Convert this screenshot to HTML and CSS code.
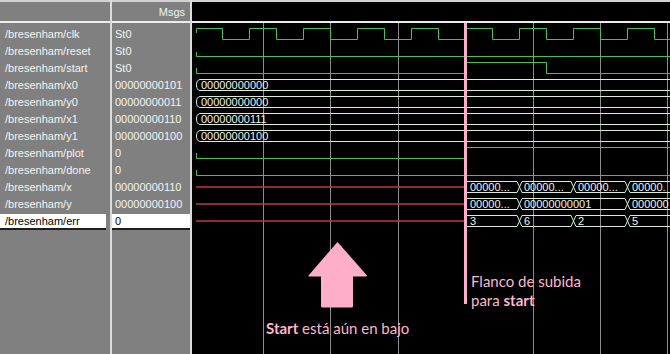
FILE: index.html
```html
<!DOCTYPE html>
<html>
<head>
<meta charset="utf-8">
<link rel="stylesheet" href="styles.css">
</head>
<body>
<div class="app">
  <div class="col names">
    <div class="head"></div>
    <div class="rows">
      <div class="row">/bresenham/clk</div>
      <div class="row">/bresenham/reset</div>
      <div class="row">/bresenham/start</div>
      <div class="row">/bresenham/x0</div>
      <div class="row">/bresenham/y0</div>
      <div class="row">/bresenham/x1</div>
      <div class="row">/bresenham/y1</div>
      <div class="row">/bresenham/plot</div>
      <div class="row">/bresenham/done</div>
      <div class="row">/bresenham/x</div>
      <div class="row">/bresenham/y</div>
      <div class="row sel">/bresenham/err</div>
    </div>
  </div>
  <div class="sep"></div>
  <div class="col values">
    <div class="head">Msgs</div>
    <div class="rows">
      <div class="row">St0</div>
      <div class="row">St0</div>
      <div class="row">St0</div>
      <div class="row">00000000101</div>
      <div class="row">00000000011</div>
      <div class="row">00000000110</div>
      <div class="row">00000000100</div>
      <div class="row">0</div>
      <div class="row">0</div>
      <div class="row">00000000110</div>
      <div class="row">00000000100</div>
      <div class="row sel">0</div>
    </div>
  </div>
  <div class="sep"></div>
  <div class="wave">
    <div class="whead"></div>
    <svg class="canvas" width="478" height="331" viewBox="192 23 478 331" xmlns="http://www.w3.org/2000/svg">
      <g class="grid" stroke="#8c8c8c" stroke-width="1">
        <line x1="263.5" y1="23" x2="263.5" y2="354"/>
        <line x1="330.5" y1="23" x2="330.5" y2="354"/>
        <line x1="398.5" y1="23" x2="398.5" y2="354"/>
        <line x1="533.5" y1="23" x2="533.5" y2="354"/>
        <line x1="600.5" y1="23" x2="600.5" y2="354"/>
        <line x1="667.5" y1="23" x2="667.5" y2="354"/>
      </g>
      <g fill="none" stroke="#45c445" stroke-width="1">
        <path d="M196.5,33 V28.5 H222.5 V39.5 H249.5 V28.5 H276.5 V39.5 H303.5 V28.5 H330.5 V39.5 H357.5 V28.5 H384.5 V39.5 H411.5 V28.5 H438.5 V39.5 H465.5 V28.5 H492.5 V39.5 H519.5 V28.5 H546.5 V39.5 H573.5 V28.5 H600.5 V39.5 H627.5 V28.5 H654.5 V39.5 H670"/>
        <path d="M196.5,52 V56.5 H670"/>
        <path d="M196.5,68 V73.5 H465.5 V62.5 H546.5 V73.5 H670"/>
        <path d="M196.5,153 V158.5 H465.5 V147.5 H670"/>
        <path d="M196.5,170 V175.5 H670"/>
      </g>
      <g fill="none" stroke="#c03a3a" stroke-width="1.5">
        <line x1="196" y1="187" x2="465" y2="187"/>
        <line x1="196" y1="204" x2="465" y2="204"/>
        <line x1="196" y1="221" x2="465" y2="221"/>
      </g>
      <g fill="none" stroke="#d6eed6" stroke-width="1">
        <path d="M200,79.5 Q196.5,80 196.5,85 Q196.5,90 200,90.5 M200,79.5 H670 M200,90.5 H670"/>
        <path d="M200,96.5 Q196.5,97 196.5,102 Q196.5,107 200,107.5 M200,96.5 H670 M200,107.5 H670"/>
        <path d="M200,113.5 Q196.5,114 196.5,119 Q196.5,124 200,124.5 M200,113.5 H670 M200,124.5 H670"/>
        <path d="M200,130.5 Q196.5,131 196.5,136 Q196.5,141 200,141.5 M200,130.5 H670 M200,141.5 H670"/>
        <path d="M466.5,181.5 V192.5 M466.5,181.5 H517 L519.5,187 L517,192.5 H466.5 M522,181.5 L519.5,187 L522,192.5 M522,181.5 H571 L573.5,187 L571,192.5 H522 M576,181.5 L573.5,187 L576,192.5 M576,181.5 H625 L627.5,187 L625,192.5 H576 M630,181.5 L627.5,187 L630,192.5 M630,181.5 H670 M630,192.5 H670"/>
        <path d="M466.5,198.5 V209.5 M466.5,198.5 H517 L519.5,204 L517,209.5 H466.5 M522,198.5 L519.5,204 L522,209.5 M522,198.5 H625 L627.5,204 L625,209.5 H522 M630,198.5 L627.5,204 L630,209.5 M630,198.5 H670 M630,209.5 H670"/>
        <path d="M466.5,215.5 V226.5 M466.5,215.5 H517 L519.5,221 L517,226.5 H466.5 M522,215.5 L519.5,221 L522,226.5 M522,215.5 H571 L573.5,221 L571,226.5 H522 M576,215.5 L573.5,221 L576,226.5 M576,215.5 H625 L627.5,221 L625,226.5 H576 M630,215.5 L627.5,221 L630,226.5 M630,215.5 H670 M630,226.5 H670"/>
      </g>
      <g class="busval">
        <text x="201" y="89">00000000000</text>
        <text x="201" y="106">00000000000</text>
        <text x="201" y="123">00000000111</text>
        <text x="201" y="140">00000000100</text>
        <text x="470" y="191">00000...</text>
        <text x="524" y="191">00000...</text>
        <text x="578" y="191">00000...</text>
        <text x="632" y="191">00000.</text>
        <text x="470" y="208">00000...</text>
        <text x="524" y="208">00000000001</text>
        <text x="632" y="208">000000</text>
        <text x="470" y="225">3</text>
        <text x="524" y="225">6</text>
        <text x="578" y="225">2</text>
        <text x="632" y="225">5</text>
      </g>
      <rect x="464" y="23" width="3" height="281" fill="#ffaec9"/>
      <path d="M337.5,242 L367,275.5 Q367,276.5 366,276.5 L353,276.5 L353,306 Q353,307.5 351.5,307.5 L322.5,307.5 Q321,307.5 321,306 L321,276.5 L309,276.5 Q308,276.5 308.5,275.5 Z" fill="#ffaec9"/>
    </svg>
    <div class="note note-start"><b>Start</b> está aún en bajo</div>
    <div class="note note-edge">Flanco de subida<br>para <b>start</b></div>
  </div>
</div>
</body>
</html>
```
FILE: styles.css
```css
html, body {
  margin: 0;
  padding: 0;
  background: #808080;
}
.app {
  display: flex;
  width: 670px;
  height: 354px;
  overflow: hidden;
  font-family: "Liberation Sans", Arial, sans-serif;
  font-size: 11px;
}
.col {
  background: #808080;
  color: #f4f4f4;
}
.names { width: 110px; }
.values { width: 78px; }
.sep {
  width: 2px;
  background: #dcdcdc;
}
.head {
  height: 19px;
  border-top: 2px solid #d2d2d2;
  border-bottom: 2px solid #ececec;
  line-height: 20px;
  text-align: right;
  padding-right: 5px;
}
.rows {
  padding-top: 2.5px;
}
.row {
  height: 17px;
  line-height: 17px;
  white-space: nowrap;
}
.names .row { padding-left: 5px; }
.values .row { padding-left: 3px; }
.row.sel {
  background: #ffffff;
  color: #000000;
  height: 14px;
  line-height: 14px;
  margin-top: 1.5px;
  border-bottom: 2px solid #1e1e1e;
}
.names .row.sel { margin-right: 4px; }
.wave {
  flex: 1;
  position: relative;
  background: #000;
  overflow: hidden;
}
.whead {
  height: 19px;
  border-top: 2px solid #d2d2d2;
  border-bottom: 2px solid #ececec;
}
.canvas { display: block; }
.busval text {
  font-family: "Liberation Sans", Arial, sans-serif;
  font-size: 11px;
  fill: #eef6ee;
}
.note {
  position: absolute;
  color: #ffb6cc;
  font-family: Lato, "Open Sans", sans-serif;
  font-size: 15px;
  line-height: 19px;
  white-space: nowrap;
}
.note b { font-weight: 700; }
.note-start { left: 74px; top: 319px; }
.note-edge { left: 279px; top: 272px; }
```
